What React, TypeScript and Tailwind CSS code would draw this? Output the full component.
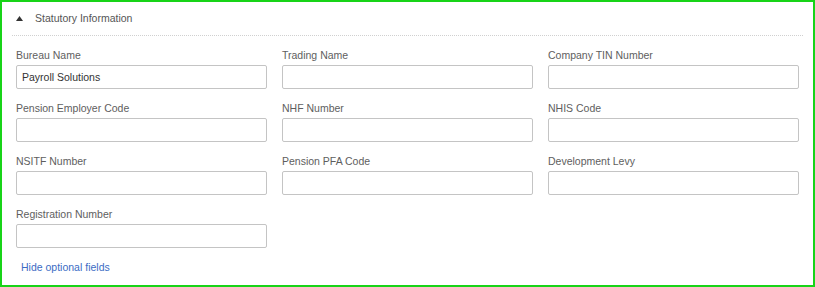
import React from 'react';

const fields: { label: string; value?: string }[] = [
  { label: 'Bureau Name', value: 'Payroll Solutions' },
  { label: 'Trading Name' },
  { label: 'Company TIN Number' },
  { label: 'Pension Employer Code' },
  { label: 'NHF Number' },
  { label: 'NHIS Code' },
  { label: 'NSITF Number' },
  { label: 'Pension PFA Code' },
  { label: 'Development Levy' },
  { label: 'Registration Number' },
];

export default function App() {
  return (
    <div
      className="w-[815px] h-[287px] bg-white border-2 border-[#18d418] overflow-hidden"
      style={{ fontFamily: '"Liberation Sans", Arial, sans-serif' }}
    >
      {/* Section header */}
      <div className="h-[33px] flex items-center pl-[14px] text-[10.5px] text-[#555]">
        <svg width="7" height="5" viewBox="0 0 7 5" className="mr-[12px] -mt-px">
          <polygon points="3.5,0 7,5 0,5" fill="#333" />
        </svg>
        <span>Statutory Information</span>
      </div>
      <div className="mx-[10px] border-b border-dotted border-[#d0d0d0]"></div>

      {/* Fields */}
      <div className="px-[14px] pt-[11px]">
        <div className="grid grid-cols-3 gap-x-[15px] gap-y-[11px]">
          {fields.map((f) => (
            <div key={f.label} className="flex flex-col">
              <label className="h-[14px] pt-[1px] leading-[14px] text-[10.5px] text-[#5e5e5e] mb-[4px]">{f.label}</label>
              <input
                readOnly
                value={f.value ?? ''}
                className="h-[24px] w-full border border-[#c4c4c4] rounded-[2px] pl-[5px] text-[10.5px] text-[#333] outline-none bg-white"
                style={{ fontFamily: '"Liberation Sans", Arial, sans-serif' }}
              />
            </div>
          ))}
        </div>
        <div className="mt-[12px] pl-[5px] h-[14px] leading-[14px] text-[10.5px] text-[#3b6cc4]">
          <a href="#">Hide optional fields</a>
        </div>
      </div>
    </div>
  );
}
